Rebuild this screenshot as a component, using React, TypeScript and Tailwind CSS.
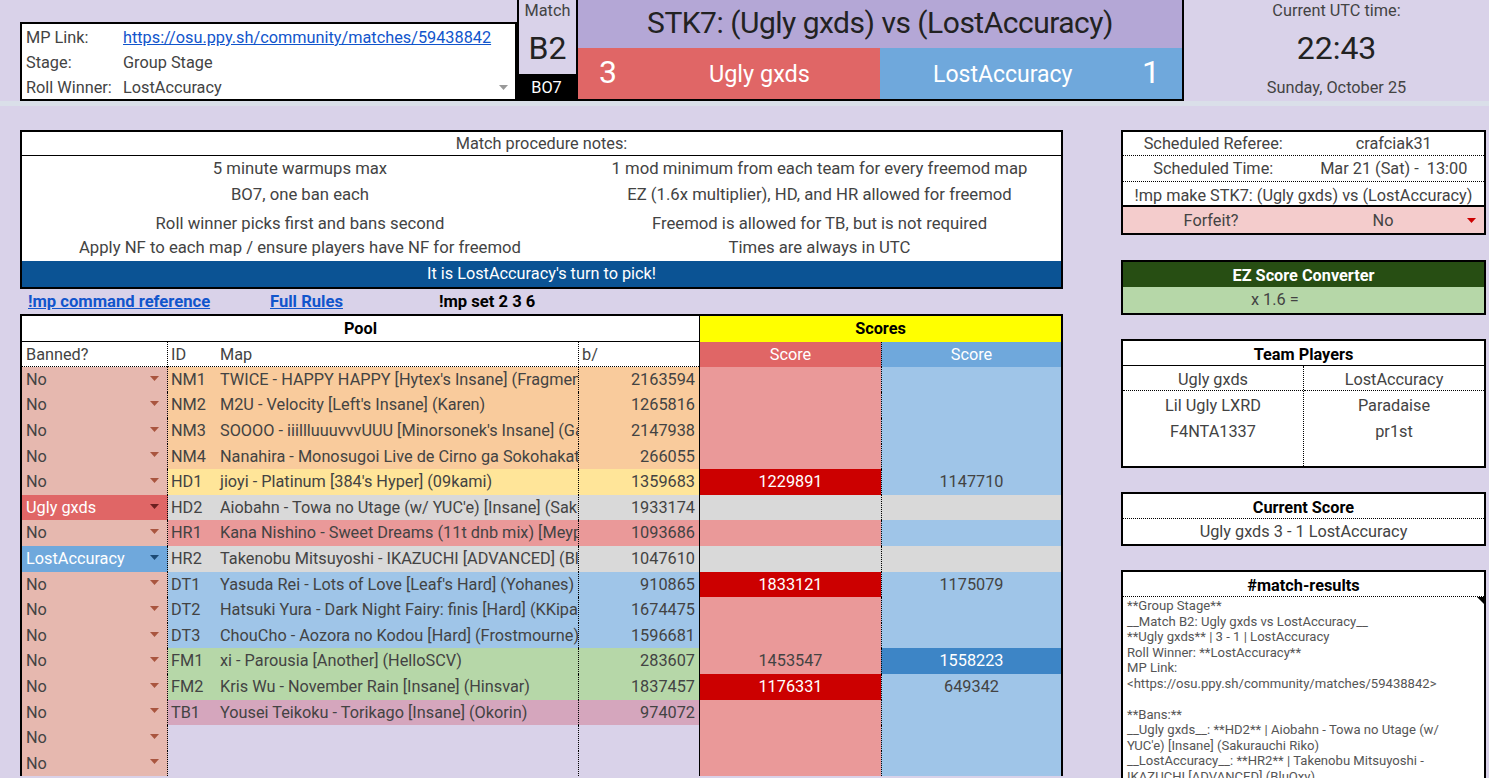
type Row = {
  ban: string;
  id: string;
  map: string;
  bid: string;
  bg: string;
  red?: string;
  blue?: string;
  redWin?: boolean;
  blueWin?: boolean;
  banned?: boolean;
};

const NM = "bg-[#f9cb9c]";
const HD = "bg-[#ffe599]";
const GR = "bg-[#d9d9d9]";
const HR = "bg-[#ea9999]";
const DT = "bg-[#9fc5e8]";
const FM = "bg-[#b6d7a8]";
const TB = "bg-[#d5a6bd]";

const rows: Row[] = [
  { ban: "No", id: "NM1", map: "TWICE - HAPPY HAPPY [Hytex's Insane] (Fragment)", bid: "2163594", bg: NM },
  { ban: "No", id: "NM2", map: "M2U - Velocity [Left's Insane] (Karen)", bid: "1265816", bg: NM },
  { ban: "No", id: "NM3", map: "SOOOO - iiillluuuvvvUUU [Minorsonek's Insane] (Gaia)", bid: "2147938", bg: NM },
  { ban: "No", id: "NM4", map: "Nanahira - Monosugoi Live de Cirno ga Sokohakatte", bid: "266055", bg: NM },
  { ban: "No", id: "HD1", map: "jioyi - Platinum [384's Hyper] (09kami)", bid: "1359683", bg: HD, red: "1229891", blue: "1147710", redWin: true },
  { ban: "Ugly gxds", id: "HD2", map: "Aiobahn - Towa no Utage (w/ YUC'e) [Insane] (Sakurauchi Riko)", bid: "1933174", bg: GR, banned: true },
  { ban: "No", id: "HR1", map: "Kana Nishino - Sweet Dreams (11t dnb mix) [Meyp]", bid: "1093686", bg: HR },
  { ban: "LostAccuracy", id: "HR2", map: "Takenobu Mitsuyoshi - IKAZUCHI [ADVANCED] (BluOxy)", bid: "1047610", bg: GR, banned: true },
  { ban: "No", id: "DT1", map: "Yasuda Rei - Lots of Love [Leaf's Hard] (Yohanes)", bid: "910865", bg: DT, red: "1833121", blue: "1175079", redWin: true },
  { ban: "No", id: "DT2", map: "Hatsuki Yura - Dark Night Fairy: finis [Hard] (KKipalt)", bid: "1674475", bg: DT },
  { ban: "No", id: "DT3", map: "ChouCho - Aozora no Kodou [Hard] (Frostmourne)", bid: "1596681", bg: DT },
  { ban: "No", id: "FM1", map: "xi - Parousia [Another] (HelloSCV)", bid: "283607", bg: FM, red: "1453547", blue: "1558223", blueWin: true },
  { ban: "No", id: "FM2", map: "Kris Wu - November Rain [Insane] (Hinsvar)", bid: "1837457", bg: FM, red: "1176331", blue: "649342", redWin: true },
  { ban: "No", id: "TB1", map: "Yousei Teikoku - Torikago [Insane] (Okorin)", bid: "974072", bg: TB },
  { ban: "No", id: "", map: "", bid: "", bg: "" },
  { ban: "No", id: "", map: "", bid: "", bg: "" },
];

const results = [
  "**Group Stage**",
  "__Match B2: Ugly gxds vs LostAccuracy__",
  "**Ugly gxds** | 3 - 1 | LostAccuracy",
  "Roll Winner: **LostAccuracy**",
  "MP Link:",
  "<https://osu.ppy.sh/community/matches/59438842>",
  "\u00a0",
  "**Bans:**",
  "__Ugly gxds__: **HD2** | Aiobahn - Towa no Utage (w/",
  "YUC'e) [Insane] (Sakurauchi Riko)",
  "__LostAccuracy__: **HR2** | Takenobu Mitsuyoshi -",
  "IKAZUCHI [ADVANCED] (BluOxy)",
];

function Caret({ className }: { className: string }) {
  return (
    <svg width="9" height="5" viewBox="0 0 9 5" className={className}>
      <path d="M0 0h9L4.5 5z" fill="currentColor" />
    </svg>
  );
}

function PoolRow({ row }: { row: Row }) {
  const banBg = row.ban === "Ugly gxds" ? "bg-[#e06666] text-white" : row.ban === "LostAccuracy" ? "bg-[#6fa8dc] text-white" : "bg-[#e6b8af]";
  const caret = row.ban === "Ugly gxds" ? "text-[#6b1f1f]" : row.ban === "LostAccuracy" ? "text-[#1c4a75]" : "text-[#a9553f]";
  const redBg = row.banned ? GR : row.redWin ? "bg-[#cc0000] text-white" : HR;
  const blueBg = row.banned ? GR : row.blueWin ? "bg-[#3d85c6] text-white" : DT;
  return (
    <div className="grid grid-cols-[146px_48px_362px_121px_182px_180px] h-[25.6px] leading-[25.6px]">
      <div className={`${banBg} flex items-center justify-between pl-[4px] pr-[8px] border-r border-dotted border-black`}>
        <span>{row.ban}</span>
        <Caret className={`${caret} -mt-[3px]`} />
      </div>
      <div className={`${row.bg} pl-[3px]`}>{row.id}</div>
      <div className={`${row.bg} pl-[4px] overflow-hidden whitespace-nowrap`}>{row.map}</div>
      <div className={`${row.bg} text-right pr-[4px] border-l border-dotted border-black`}>{row.bid}</div>
      <div className={`${redBg} text-center border-l border-solid border-l-black`}>{row.red}</div>
      <div className={`${blueBg} text-center border-l border-dotted border-black`}>{row.blue}</div>
    </div>
  );
}

export default function App() {
  return (
    <div className="h-[778px] w-[1489px] overflow-hidden bg-[#d9d2e9] text-[#434343] text-[16.3px] font-['Roboto',sans-serif]">
      {/* Header */}
      <header className="flex h-[101px] pl-[20px]">
        <div className="mt-[22px] h-[79px] w-[497px] border-2 border-black bg-white px-[4px] py-[1px] leading-[25px]">
          <div className="flex">
            <span className="w-[97px]">MP Link:</span>
            <a className="text-[#1155cc] underline">https://osu.ppy.sh/community/matches/59438842</a>
          </div>
          <div className="flex">
            <span className="w-[97px]">Stage:</span>
            <span>Group Stage</span>
          </div>
          <div className="flex items-center">
            <span className="w-[97px]">Roll Winner:</span>
            <span className="flex-1">LostAccuracy</span>
            <Caret className="text-[#999999] mr-[3px]" />
          </div>
        </div>
        <div className="w-[61px] flex flex-col text-center border-r-2 border-black">
          <div className="h-[74px] flex flex-col items-center border-l-2 border-black">
            <span className="mt-[-2px] leading-[26px]">Match</span>
            <span className="text-[32px] leading-[48px] text-[#222]">B2</span>
          </div>
          <div className="h-[27px] bg-black text-white leading-[28px]">BO7</div>
        </div>
        <div className="w-[606px] flex flex-col border-b-2 border-r-2 border-black">
          <div className="h-[48px] bg-[#b4a7d6] text-center text-[30px] tracking-[-0.5px] leading-[46px] text-[#222]">STK7: (Ugly gxds) vs (LostAccuracy)</div>
          <div className="flex flex-1 text-white">
            <div className="w-[302px] bg-[#e06666] flex items-center justify-between pl-[21px]">
              <span className="text-[32px] -mt-[3px]">3</span>
              <span className="text-[23.5px] mr-[70px] mt-[3px]">Ugly gxds</span>
            </div>
            <div className="flex-1 bg-[#6fa8dc] flex items-center justify-between pr-[22px]">
              <span className="text-[23px] ml-[53px] mt-[4px]">LostAccuracy</span>
              <span className="text-[32px] -mt-[3px]">1</span>
            </div>
          </div>
        </div>
        <div className="flex-1 flex flex-col items-center">
          <span className="leading-[22px]">Current UTC time:</span>
          <span className="text-[32px] leading-[54px] text-[#222] -mt-[1px]">22:43</span>
          <span className="leading-[20px] mt-[3px]">Sunday, October 25</span>
        </div>
      </header>
      <div className="h-[5px] bg-[#dadfe9]" />

      <main className="flex justify-between pl-[20px] pr-[3px] pt-[24px]">
        {/* Left column */}
        <div className="w-[1043px]">
          <div className="border-2 border-black bg-white">
            <div className="h-[24px] leading-[24px] text-center border-b border-black">Match procedure notes:</div>
            <div className="grid grid-cols-[556px_1fr] text-center text-[16.7px] leading-[25.6px]">
              <div>5 minute warmups max</div>
              <div>1 mod minimum from each team for every freemod map</div>
              <div>BO7, one ban each</div>
              <div>EZ (1.6x multiplier), HD, and HR allowed for freemod</div>
              <div className="h-[28px] pt-[4px]">Roll winner picks first and bans second</div>
              <div className="h-[28px] pt-[4px]">Freemod is allowed for TB, but is not required</div>
              <div>Apply NF to each map / ensure players have NF for freemod</div>
              <div>Times are always in UTC</div>
            </div>
            <div className="h-[26px] leading-[26px] bg-[#0b5394] text-white text-center">It is LostAccuracy's turn to pick!</div>
          </div>
          <div className="flex h-[25px] items-center pt-[3px] font-bold text-[16.6px]">
            <a className="ml-[8px] w-[242px] text-[#1155cc] underline">!mp command reference</a>
            <a className="w-[169px] text-[#1155cc] underline">Full Rules</a>
            <span className="text-black">!mp set 2 3 6</span>
          </div>
          <div className="border-2 border-b-0 border-black bg-[#d9d2e9]">
            <div className="flex h-[26px] font-bold text-black text-center leading-[26px]">
              <div className="w-[677px] bg-white border-b border-black">Pool</div>
              <div className="flex-1 bg-[#ffff00] border-l border-black">Scores</div>
            </div>
            <div className="grid grid-cols-[146px_48px_362px_121px_182px_180px] h-[25px] leading-[25px] bg-white border-b border-dotted border-black">
              <div className="pl-[4px] border-r border-dotted border-black">Banned?</div>
              <div className="pl-[3px]">ID</div>
              <div className="pl-[4px]">Map</div>
              <div className="pl-[3px] border-l border-dotted border-black">b/</div>
              <div className="bg-[#e06666] text-white text-center border-l border-black">Score</div>
              <div className="bg-[#6fa8dc] text-white text-center border-l border-dotted border-black">Score</div>
            </div>
            {rows.map((r, i) => (
              <PoolRow key={i} row={r} />
            ))}
          </div>
        </div>

        {/* Right column */}
        <div className="w-[365px] flex flex-col">
          <div className="h-[105px] border-2 border-black bg-white text-center leading-[24px]">
            <div className="grid grid-cols-[50%_50%] h-[24px] border-b border-dotted border-black">
              <span>Scheduled Referee:</span>
              <span>crafciak31</span>
            </div>
            <div className="grid grid-cols-[50%_50%] h-[26px] border-b border-dotted border-black leading-[25px]">
              <span>Scheduled Time:</span>
              <span className="whitespace-pre">Mar 21 (Sat) -  13:00</span>
            </div>
            <div className="h-[25px] leading-[27px] border-b-2 border-black whitespace-nowrap">!mp make STK7: (Ugly gxds) vs (LostAccuracy)</div>
            <div className="flex h-[26px] items-center pt-[1px] bg-[#f4cccc]">
              <span className="w-[176px]">Forfeit?</span>
              <span className="flex-1">No</span>
              <Caret className="text-[#cc0000] mr-[8px]" />
            </div>
          </div>

          <div className="mt-[25px] h-[55px] border-2 border-black bg-[#b6d7a8]">
            <div className="h-[25px] leading-[27px] bg-[#274e13] text-white font-bold text-center">EZ Score Converter</div>
            <div className="h-[26px] leading-[26px] pl-[128px]">x 1.6 =</div>
          </div>

          <div className="mt-[24px] h-[129px] border-2 border-black bg-white text-center">
            <div className="h-[25px] leading-[27px] font-bold text-black border-b border-black">Team Players</div>
            <div className="grid grid-cols-[181px_1fr] h-[100px] leading-[25.6px]">
              <div className="border-r border-dotted border-black">
                <div className="h-[25px] leading-[28px] border-b border-dotted border-black mb-[2px]">Ugly gxds</div>
                <div>Lil Ugly LXRD</div>
                <div>F4NTA1337</div>
              </div>
              <div>
                <div className="h-[25px] leading-[28px] border-b border-dotted border-black mb-[2px]">LostAccuracy</div>
                <div>Paradaise</div>
                <div>pr1st</div>
              </div>
            </div>
          </div>

          <div className="mt-[24px] h-[54px] border-2 border-black bg-white text-center">
            <div className="h-[25px] leading-[27px] font-bold text-black border-b border-dotted border-black">Current Score</div>
            <div className="leading-[25px]">Ugly gxds 3 - 1 LostAccuracy</div>
          </div>

          <div className="mt-[24px] h-[300px] border-2 border-b-0 border-black bg-white">
            <div className="h-[25px] leading-[27px] text-center font-bold text-black border-b border-dotted border-black">#match-results</div>
            <div className="relative pl-[4px] pt-[1px] text-[13.1px] leading-[15.5px] text-[#555555]">
              <div className="absolute right-0 top-0 h-0 w-0 border-l-[7px] border-t-[7px] border-l-transparent border-t-black" />
              {results.map((l, i) => (
                <div key={i} className="whitespace-nowrap">{l}</div>
              ))}
            </div>
          </div>
        </div>
      </main>
    </div>
  );
}
